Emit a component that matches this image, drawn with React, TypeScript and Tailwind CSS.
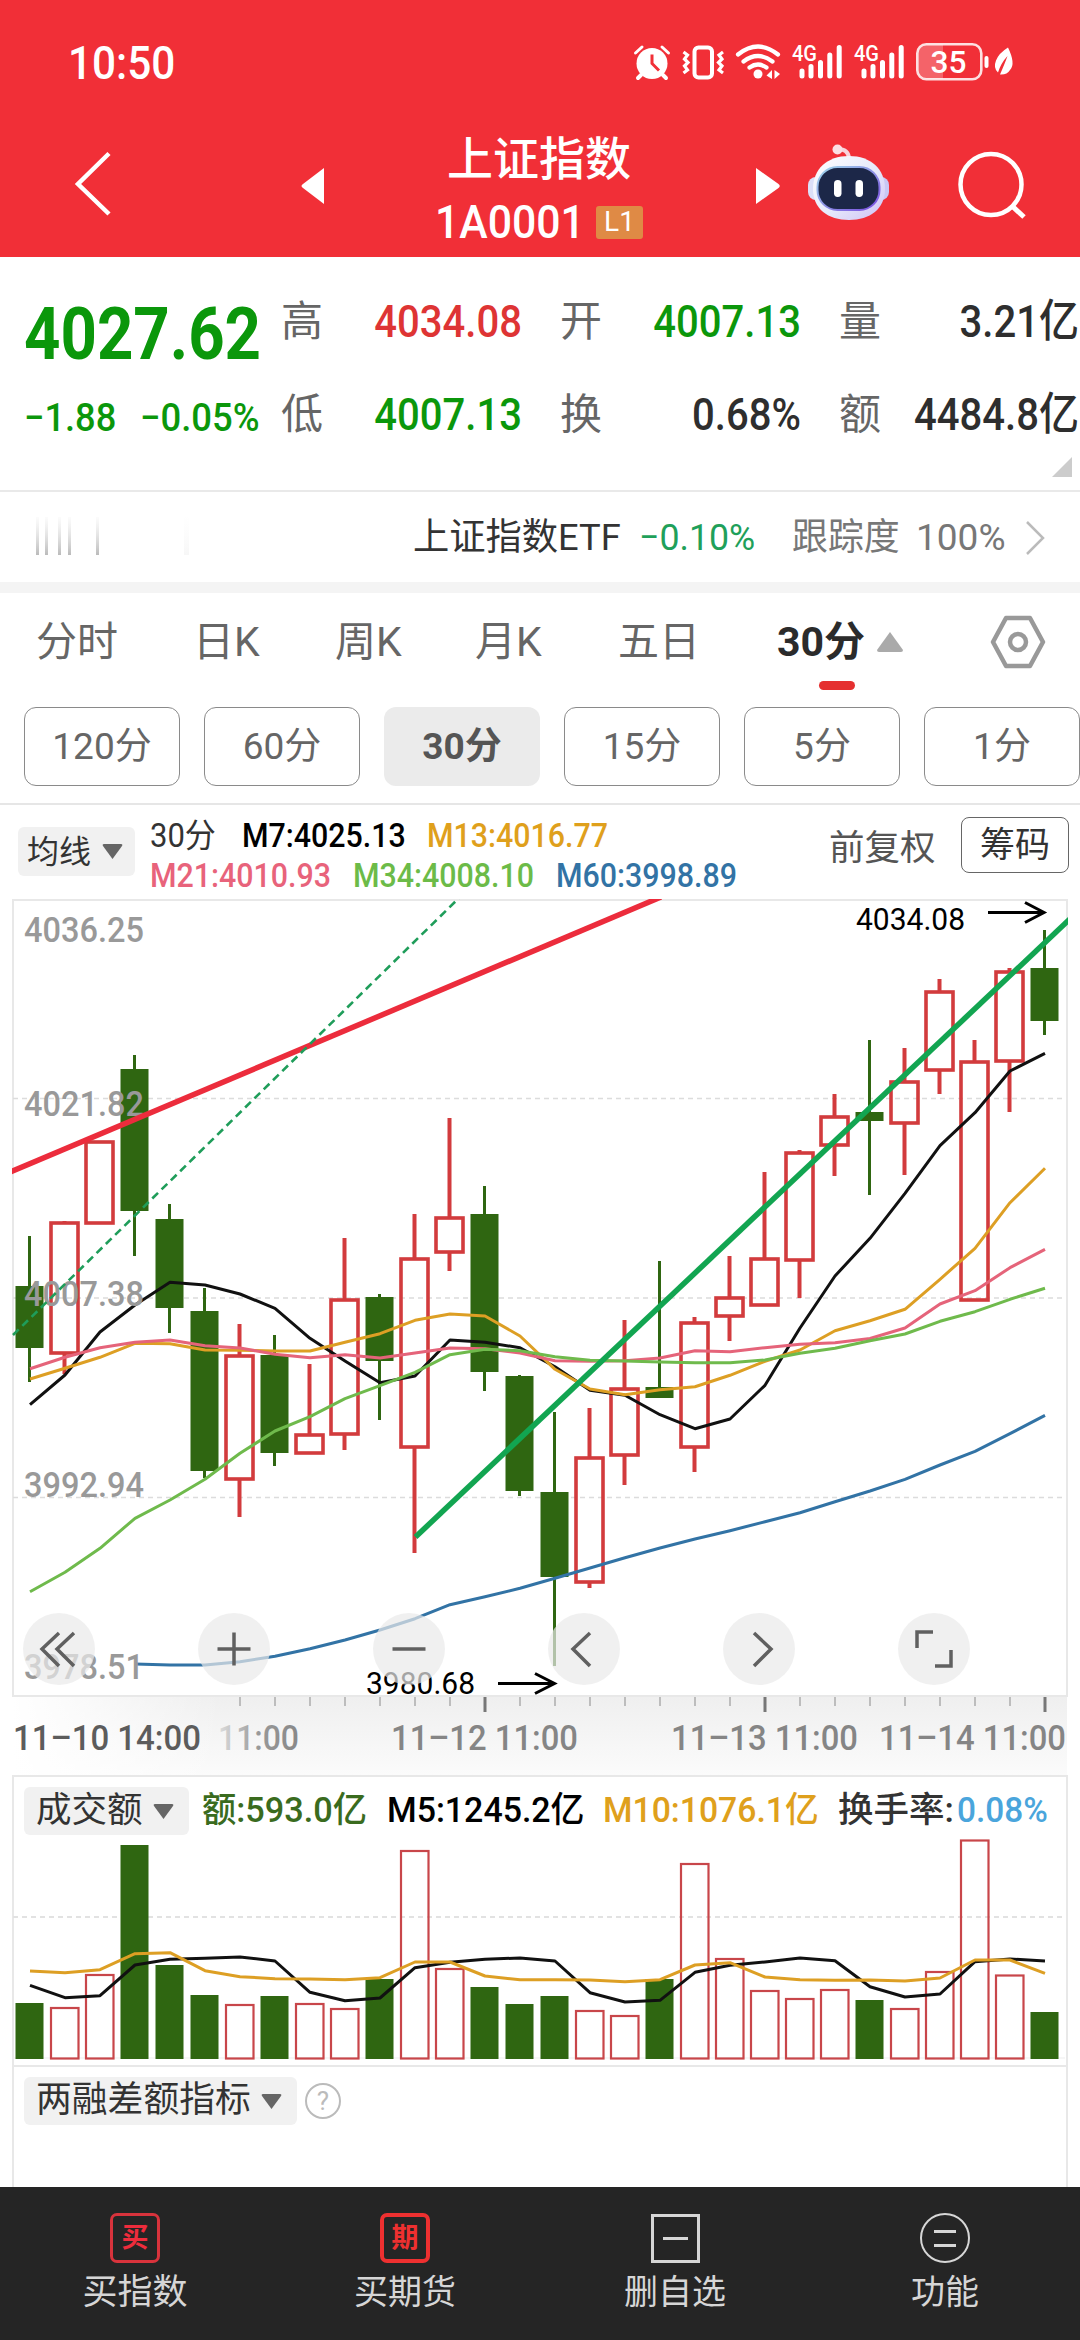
import type { ReactNode } from 'react'

const GREEN = '#2f6611'
const RED = '#d23b3d'

// x of the n-th bar
const cx = (i: number) => 29.5 + i * 35

type Candle = { up: boolean; high: number; top: number; bottom: number; low: number }

const candles: Candle[] = [
  { up: false, high: 1236, top: 1286, bottom: 1348, low: 1382 },
  { up: true, high: 1221, top: 1223, bottom: 1353, low: 1374 },
  { up: true, high: 1142, top: 1142, bottom: 1223, low: 1223 },
  { up: false, high: 1055, top: 1069, bottom: 1211, low: 1256 },
  { up: false, high: 1204, top: 1219, bottom: 1308, low: 1333 },
  { up: false, high: 1288, top: 1311, bottom: 1471, low: 1478 },
  { up: true, high: 1324, top: 1356, bottom: 1479, low: 1517 },
  { up: false, high: 1335, top: 1355, bottom: 1453, low: 1466 },
  { up: true, high: 1364, top: 1435, bottom: 1453, low: 1453 },
  { up: true, high: 1238, top: 1300, bottom: 1434, low: 1450 },
  { up: false, high: 1294, top: 1297, bottom: 1361, low: 1420 },
  { up: true, high: 1214, top: 1259, bottom: 1447, low: 1553 },
  { up: true, high: 1118, top: 1218, bottom: 1252, low: 1271 },
  { up: false, high: 1186, top: 1214, bottom: 1372, low: 1391 },
  { up: false, high: 1375, top: 1376, bottom: 1491, low: 1496 },
  { up: false, high: 1412, top: 1492, bottom: 1577, low: 1666 },
  { up: true, high: 1408, top: 1458, bottom: 1582, low: 1588 },
  { up: true, high: 1320, top: 1389, bottom: 1455, low: 1485 },
  { up: false, high: 1261, top: 1387, bottom: 1398, low: 1398 },
  { up: true, high: 1317, top: 1323, bottom: 1447, low: 1472 },
  { up: true, high: 1256, top: 1298, bottom: 1316, low: 1341 },
  { up: true, high: 1172, top: 1259, bottom: 1305, low: 1305 },
  { up: true, high: 1150, top: 1153, bottom: 1260, low: 1298 },
  { up: true, high: 1094, top: 1117, bottom: 1145, low: 1176 },
  { up: false, high: 1040, top: 1112, bottom: 1121, low: 1195 },
  { up: true, high: 1048, top: 1082, bottom: 1123, low: 1175 },
  { up: true, high: 979, top: 992, bottom: 1070, low: 1094 },
  { up: true, high: 1040, top: 1062, bottom: 1300, low: 1300 },
  { up: true, high: 968, top: 972, bottom: 1061, low: 1112 },
  { up: false, high: 930, top: 968, bottom: 1021, low: 1035 },
]

const m7 = [1404.7, 1375, 1332, 1305, 1282.3, 1285, 1294, 1308.3, 1338.3, 1361, 1382.7, 1376, 1340, 1342.3, 1347.7, 1366.7, 1390.3, 1395.3, 1414.7, 1428.7, 1419, 1385.3, 1328, 1276, 1238.3, 1193.3, 1145.7, 1112.7, 1071, 1053.3]
const m13 = [1379, 1368.3, 1357.3, 1343.3, 1343.7, 1350, 1350.3, 1351, 1351, 1342.3, 1333.7, 1320.3, 1314, 1316, 1336, 1369.3, 1389, 1394.7, 1389.7, 1386.7, 1375.3, 1361.3, 1350, 1330.7, 1320.7, 1309.3, 1279.3, 1248.3, 1202.7, 1168.3]
const m21 = [1368.7, 1357.3, 1347.7, 1342.3, 1340, 1345.7, 1348, 1354.3, 1357.7, 1354.7, 1358, 1353, 1348, 1348.7, 1353, 1360.7, 1361.3, 1360.7, 1358, 1350.7, 1351.7, 1347.7, 1344.3, 1342.7, 1338.5, 1328, 1304, 1290.7, 1267.7, 1249.3]
const m34 = [1591.7, 1572.3, 1548.3, 1518.3, 1500, 1479.3, 1453.3, 1431, 1416.7, 1398.7, 1385.7, 1372.3, 1354.7, 1349.3, 1350.7, 1356.7, 1360.3, 1361, 1362, 1362.7, 1362.7, 1360, 1353.3, 1348.3, 1340.7, 1334, 1321.3, 1311.7, 1299.3, 1288.3]
const m60 = [1664, 1665, 1665, 1661.7, 1656.3, 1648.7, 1640, 1630, 1618.7, 1604.7, 1596.7, 1588.3, 1578.3, 1568, 1557.7, 1548, 1539, 1530.7, 1521.7, 1512.7, 1501.7, 1491, 1479.3, 1465, 1451.3, 1433.7, 1415.3]

const volumes = [2003, 2008, 1975, 1845, 1965, 1995, 2005, 1996, 2004, 2009, 1979, 1851, 1969, 1987, 2004, 1996, 2011, 2016, 1979, 1864, 1959, 1991, 1999, 1990, 2000, 2009, 1972, 1840.5, 1975.5, 2012]
const v5 = [1985.3, 1997.7, 1995.7, 1965, 1959.3, 1958.3, 1957, 1961, 1992.3, 2000.7, 1998, 1967.7, 1962.3, 1959.3, 1958, 1961, 1992.7, 2002, 2000.3, 1972.3, 1965.3, 1962, 1958, 1960.7, 1986.7, 1997, 1994, 1961.7, 1959, 1961]
const v10 = [1971, 1972.7, 1969.7, 1953.7, 1952.7, 1970.7, 1976.7, 1978.7, 1979, 1979.7, 1977.7, 1962, 1962, 1976, 1979.7, 1979.7, 1980, 1981.7, 1979.7, 1965, 1962.7, 1977, 1979.7, 1980.3, 1980, 1981, 1978, 1960, 1960, 1973.3]

function Line({ values, color, start = 0 }: { values: number[]; color: string; start?: number }) {
  return (
    <polyline
      points={values.map((y, i) => `${cx(i + start) + 0.5},${y}`).join(' ')}
      fill="none"
      stroke={color}
      strokeWidth={3}
      strokeLinejoin="round"
    />
  )
}

function StatusIcons() {
  return (
    <svg className="h-[44px] w-[390px]" viewBox="630 40 390 44" fill="none" stroke="#fff">
      {/* alarm */}
      <circle cx="652" cy="62.500" r="15.500" fill="#fff" stroke="none" />
      <path d="M635.500 52 L642 46 M662 46 L668.500 52" strokeWidth="3" strokeLinecap="round" />
      <path d="M641 74 L638 77 M663 74 L666 77" strokeWidth="4" strokeLinecap="round" />
      <path d="M652 53.500 V62.500 L659 69.500" stroke="#f12f37" strokeWidth="3" />
      {/* vibrate */}
      <rect x="694.500" y="46.500" width="17.500" height="30" rx="4" strokeWidth="4" />
      <path d="M683.500 51 L687.500 54 L684.500 58 L688 61.500 L684.500 65 L687.500 69 L683.500 72" strokeWidth="3.200" />
      <path d="M723 51 L719 54 L722 58 L718.500 61.500 L722 65 L719 69 L723 72" strokeWidth="3.200" />
      {/* wifi */}
      <path d="M738 53.500 Q758 37.500 778 53.500" strokeWidth="4.200" strokeLinecap="round" />
      <path d="M743.500 60.500 Q758 49.500 772.500 60.500" strokeWidth="4.200" strokeLinecap="round" />
      <path d="M749.500 66.500 Q758 60.500 766.500 66.500" strokeWidth="4.200" strokeLinecap="round" />
      <circle cx="758" cy="73" r="4.500" fill="#fff" stroke="none" />
      <path d="M772 69 V78 L766.500 74.500 Z M774.500 69 V78 L780 73 Z" fill="#fff" stroke="none" />
      {/* two sim signals */}
      {[0, 62].map((dx) => (
        <g key={dx} transform={`translate(${dx} 0)`}>
          <path d="M802 70 V75 M811 65.500 V75 M820.500 61.500 V75 M829.800 54 V75 M839.200 46.500 V75" strokeWidth="5" strokeLinecap="round" />
          <text x="792" y="60" fontSize="21.500" fontWeight="500" fill="#fff" stroke="none" textLength="25" lengthAdjust="spacingAndGlyphs">4G</text>
        </g>
      ))}
      {/* battery */}
      <path d="M943 43.500 H927 a9 9 0 0 0 -9 9 V69 a9 9 0 0 0 9 9 H943 Z" fill="#fff" fillOpacity=".25" stroke="none" />
      <rect x="917.300" y="43.300" width="64" height="35" rx="9" strokeWidth="2.600" strokeOpacity=".85" />
      <text x="930.500" y="71.500" fontSize="31" fontWeight="500" fill="#fff" stroke="none" textLength="36" lengthAdjust="spacingAndGlyphs">35</text>
      <path d="M986.500 57 V65" strokeWidth="4" strokeLinecap="round" />
      <path d="M1008 46.500 Q1016 63 1010 69 Q1007 74 1000 73.500 Q1005 62 1007.500 55 Q1001 62 998 71.500 Q993 67 996 59.500 Q999 52 1008 46.500 Z" fill="#fff" stroke="none" />
    </svg>
  )
}

function Robot() {
  return (
    <svg className="h-[80px] w-[84px]" viewBox="806 143 84 80">
      <defs>
        <linearGradient id="head" x1="0" y1="0" x2="1" y2="1">
          <stop offset="0" stopColor="#fff" />
          <stop offset=".55" stopColor="#e6e9fb" />
          <stop offset="1" stopColor="#cfc0f4" />
        </linearGradient>
        <linearGradient id="rim" x1="0" y1="0" x2="1" y2="1">
          <stop offset="0" stopColor="#9fd8ea" />
          <stop offset="1" stopColor="#7a4be0" />
        </linearGradient>
      </defs>
      <path d="M837 149 Q847 149 848 158" fill="none" stroke="#f8d3dc" strokeWidth="4" />
      <circle cx="836.500" cy="149.500" r="5" fill="#fbdfe4" />
      <rect x="807" y="177" width="16" height="23" rx="8" fill="#dcdff8" />
      <rect x="872" y="177" width="16" height="23" rx="8" fill="#c9c8f4" />
      <path d="M848 156 C870 156 884 169 884 189 C884 209 869 220 848 220 C827 220 812 209 812 189 C812 169 826 156 848 156 Z" fill="url(#head)" />
      <rect x="816.500" y="167" width="62" height="43" rx="20" fill="#1c2748" stroke="url(#rim)" strokeWidth="2" />
      <rect x="833" y="180" width="7.500" height="17" rx="3.700" fill="#fff" />
      <rect x="854.500" y="180" width="7.500" height="17" rx="3.700" fill="#fff" />
    </svg>
  )
}

function Header() {
  return (
    <header className="h-[257px] bg-[#f12f37] text-white">
      <div className="flex h-[125px] items-center pl-[68px]">
        <span className="w-[562px] text-[46px] leading-none">
          <span className="inline-block origin-left scale-x-[.92] font-medium">10:50</span>
        </span>
        <StatusIcons />
      </div>
      <div className="flex h-[132px]">
        <svg className="mt-[20px] ml-[70px] h-[80px] w-[50px]" viewBox="70 145 50 80" fill="none" stroke="#fff" strokeWidth="4.500">
          <path d="M109 153.500 L78 184 L109 214" />
        </svg>
        <svg className="mt-[20px] ml-[175px] h-[80px] w-[40px]" viewBox="295 145 40 80" fill="#fff">
          <path d="M324 168 V204 L303 188 Q300 186 303 184 Z" />
        </svg>
        <div className="ml-[79px] flex w-[250px] flex-col items-center pt-[11px]">
          <div className="text-[46px] leading-[46px] font-medium">上证指数</div>
          <div className="mt-[17px] flex w-[208px] items-center">
            <span className="w-[161px] origin-left scale-x-[.93] text-[46px] leading-none font-medium whitespace-nowrap">1A0001</span>
            <span className="flex h-[33px] w-[47px] shrink-0 items-center justify-center rounded-[3px] bg-[#df8a45] text-[28px] leading-none">L1</span>
          </div>
        </div>
        <svg className="mt-[20px] ml-[87px] h-[80px] w-[40px]" viewBox="750 145 40 80" fill="#fff">
          <path d="M755 168 V204 L777.500 188 Q780 186 777.500 184 Z" />
        </svg>
        <div className="mt-[18px] ml-[16px]">
          <Robot />
        </div>
        <svg className="mt-[20px] ml-[60px] h-[80px] w-[80px]" viewBox="950 145 80 80" fill="none" stroke="#fff" strokeWidth="4.500">
          <circle cx="990" cy="184.500" r="30.500" />
          <path d="M1011 206 L1023 217" strokeWidth="5" />
        </svg>
      </div>
    </header>
  )
}

const quotes = [
  { label: '高', value: '4034.08', color: 'text-[#de3434]' },
  { label: '开', value: '4007.13', color: 'text-[#0b970b]' },
  { label: '量', value: '3.21亿', color: 'text-[#2e2e2e]' },
  { label: '低', value: '4007.13', color: 'text-[#0b970b]' },
  { label: '换', value: '0.68%', color: 'text-[#2e2e2e]' },
  { label: '额', value: '4484.8亿', color: 'text-[#2e2e2e]' },
]

function Quote() {
  return (
    <section className="relative flex h-[235px] border-b-2 border-[#e9e9e9]">
      <div className="w-[281px] shrink-0 pt-[39px] pl-[24px] text-[#0b970b]">
        <div className="flex h-[76px] origin-left scale-x-[.87] items-center text-[73px] leading-none font-bold">4027.62</div>
        <div className="mt-[16px] flex h-[60px] items-center text-[39px] leading-none font-medium whitespace-nowrap">
          <span className="w-[116px] origin-left scale-x-[.93]">−1.88</span>
          <span className="w-[120px] origin-left scale-x-[.935]">−0.05%</span>
        </div>
      </div>
      <div className="grid w-[798px] shrink-0 auto-rows-[93px] grid-cols-[241px_241px_240px] gap-x-[38px] pt-[18px]">
        {quotes.map((q) => (
          <div key={q.label} className="flex items-center justify-between leading-none">
            <span className="w-[42px] text-[42px] text-[#666]">{q.label}</span>
            <span className={`flex w-[160px] origin-right scale-x-[.89] justify-end text-[45px] font-medium whitespace-nowrap ${q.color}`}>{q.value}</span>
          </div>
        ))}
      </div>
      <svg className="absolute right-[8px] bottom-[13px] size-[20px]" viewBox="0 0 20 20">
        <path d="M20 0 V20 H0 Z" fill="#ccc" />
      </svg>
    </section>
  )
}

function EtfRow() {
  return (
    <section className="flex h-[90px] items-center pt-px pl-[30px] text-[37px] leading-none whitespace-nowrap">
      <svg className="h-[50px] w-[383px]" viewBox="30 512 383 50">
        <defs>
          <linearGradient id="fade" x1="0" y1="0" x2="0" y2="1">
            <stop offset="0" stopColor="#ddd" stopOpacity=".1" />
            <stop offset="1" stopColor="#bbb" />
          </linearGradient>
        </defs>
        {[36, 45, 58, 68, 96].map((x) => (
          <rect key={x} x={x} y="516" width="3" height="38" fill="url(#fade)" />
        ))}
        <rect x="184" y="516" width="5" height="38" fill="url(#fade)" opacity=".12" />
      </svg>
      <span className="w-[226px] origin-left scale-x-[.98] text-[#333]">上证指数ETF</span>
      <span className="w-[153px] origin-left scale-x-[.965] text-[#1fa05a]">−0.10%</span>
      <span className="w-[124px] origin-left scale-x-[.97] text-[#777]">跟踪度</span>
      <span className="w-[108px] text-[#777]">100%</span>
      <svg className="h-[40px] w-[24px]" viewBox="0 0 24 40" fill="none" stroke="#bbb" strokeWidth="2.500">
        <path d="M3 4 L19 20 L3 36" />
      </svg>
    </section>
  )
}

function Tabs() {
  return (
    <nav className="flex h-[105px] items-start pt-[28px] pl-[36px] text-[41px] leading-[42px] whitespace-nowrap text-[#666]">
      <span className="w-[157px]">分时</span>
      <span className="w-[142px]">日K</span>
      <span className="w-[140px]">周K</span>
      <span className="w-[143px]">月K</span>
      <span className="w-[159px]">五日</span>
      <div className="w-[213px]">
        <div className="flex items-center">
          <span className="font-bold text-[#2b2b2b]">30分</span>
          <svg className="ml-[12px] h-[20px] w-[26px]" viewBox="0 0 26 20">
            <path d="M13 0 L26 18 Q26 20 24 20 H2 Q0 20 0 18 Z" fill="#aaa" />
          </svg>
        </div>
        <div className="mt-[18px] ml-[42px] h-[9px] w-[36px] rounded-full bg-[#e53030]" />
      </div>
      <svg className="-mt-[7px] h-[56px] w-[56px]" viewBox="0 0 56 56" fill="none" stroke="#999" strokeWidth="4.500" strokeLinejoin="round">
        <path d="M16 4 H40 L53 28 L40 52 H16 L3 28 Z" />
        <circle cx="28" cy="28" r="8" />
      </svg>
    </nav>
  )
}

const periods = ['120分', '60分', '30分', '15分', '5分', '1分']

function Periods() {
  return (
    <div className="flex h-[107px] gap-[24px] border-b-2 border-[#e6e6e6] pt-[9px] pl-[24px]">
      {periods.map((p) => (
        <button
          key={p}
          className={`flex h-[79px] w-[156px] shrink-0 items-center justify-center rounded-[12px] text-[37px] leading-none ${
            p === '30分' ? 'bg-[#ebebeb] font-bold text-[#555]' : 'border-[1.5px] border-[#8a8a8a] text-[#666]'
          }`}
        >
          {p}
        </button>
      ))}
    </div>
  )
}

function Dropdown({ className, children }: { className: string; children: ReactNode }) {
  return (
    <div className={`flex shrink-0 items-center justify-between rounded-[6px] bg-[#f1f1f1] leading-none whitespace-nowrap text-[#333] ${className}`}>
      {children}
      <svg className="h-[15px] w-[21px]" viewBox="0 0 21 15">
        <path d="M2 0 H19 Q21 0 20 2 L10.500 15 L1 2 Q0 0 2 0 Z" fill="#666" />
      </svg>
    </div>
  )
}

function AverageLegend() {
  return (
    <div className="flex h-[94px] items-start text-[33px] leading-none whitespace-nowrap">
      <Dropdown className="mt-[22px] ml-[18px] h-[49px] w-[117px] pr-[12px] pl-[9px] text-[32px]">均线</Dropdown>
      <div className="ml-[15px] w-[679px] pt-[10px] font-medium">
        <div className="flex h-[40px] items-center">
          <span className="w-[92px] origin-left scale-x-[.94] font-normal text-[#333]">30分</span>
          <span className="w-[185px] origin-left scale-x-[.92] text-black">M7:4025.13</span>
          <span className="origin-left scale-x-[.92] text-[#dfa01c]">M13:4016.77</span>
        </div>
        <div className="flex h-[40px] items-center">
          <span className="w-[203px] origin-left scale-x-[.92] text-[#e8637b]">M21:4010.93</span>
          <span className="w-[203px] origin-left scale-x-[.92] text-[#6cbb48]">M34:4008.10</span>
          <span className="origin-left scale-x-[.92] text-[#3273a5]">M60:3998.89</span>
        </div>
      </div>
      <span className="mt-[26px] w-[132px] text-[35.500px] text-[#555]">前复权</span>
      <span className="mt-[12px] flex h-[56px] w-[108px] items-center justify-center rounded-[8px] border-[1.5px] border-[#666] text-[35px] text-[#333]">筹码</span>
    </div>
  )
}

const axisLabels = [
  { text: '4036.25', y: 942 },
  { text: '4021.82', y: 1116 },
  { text: '4007.38', y: 1306 },
  { text: '3992.94', y: 1497 },
  { text: '3978.51', y: 1679 },
]

const dates = [
  { text: '11–10 14:00', x: 13, w: 188, fill: '#5c5c5c' },
  { text: '11:00', x: 218, w: 81, fill: 'url(#dateFade)' },
  { text: '11–12 11:00', x: 391, w: 187, fill: '#858585' },
  { text: '11–13 11:00', x: 671, w: 187, fill: '#858585' },
  { text: '11–14 11:00', x: 879, w: 187, fill: '#858585' },
]

const tools = [
  'M36 20 L19 36 L36 53 M51 20 L34 36 L51 53',
  'M19.500 36 H52.500 M36 19.500 V52.500',
  'M19.500 36 H52.500',
  'M42 20 L25 36 L42 53',
  'M31 20 L48 36 L31 53',
  'M19 35 V19 H35 M37 53 H53 V37',
]

function PriceChart() {
  return (
    <div className="relative h-[876px]">
      <svg className="block h-[876px] w-[1080px]" viewBox="0 899 1080 876">
        <defs>
          <linearGradient id="strip" x1="0" y1="0" x2="0" y2="1">
            <stop offset="0" stopColor="#efefef" />
            <stop offset="1" stopColor="#fbfbfb" />
          </linearGradient>
          <linearGradient id="stripLeft" x1="0" y1="0" x2="1" y2="0">
            <stop offset="0" stopColor="#fff" />
            <stop offset="1" stopColor="#fff" stopOpacity="0" />
          </linearGradient>
          <linearGradient id="dateFade" x1="0" y1="0" x2="1" y2="0">
            <stop offset="0" stopColor="#ddd" />
            <stop offset=".5" stopColor="#999" />
            <stop offset="1" stopColor="#888" />
          </linearGradient>
          <clipPath id="plot">
            <rect x="12" y="899" width="1056" height="798" />
          </clipPath>
        </defs>

        <rect x="13" y="1697" width="1054" height="78" fill="url(#strip)" />
        <rect x="12" y="1697" width="210" height="78" fill="url(#stripLeft)" />
        <rect x="13" y="900" width="1054" height="796" fill="none" stroke="#e8e8e8" strokeWidth="2" />
        {[1098.5, 1298, 1497.5].map((y) => (
          <path key={y} d={`M13 ${y} H1065`} stroke="#dcdcdc" strokeWidth="1.300" strokeDasharray="5 4" />
        ))}

        {candles.map((c, i) =>
          c.up ? (
            <g key={i} stroke={RED} fill="none" strokeWidth="4">
              <path d={`M${cx(i)} ${c.high} V${c.top} M${cx(i)} ${c.bottom} V${c.low}`} />
              <rect x={cx(i) - 13.5} y={c.top} width="27" height={c.bottom - c.top} strokeWidth="3.600" />
            </g>
          ) : (
            <g key={i} fill={GREEN}>
              <rect x={cx(i) - 1.5} y={c.high} width="3" height={c.low - c.high} />
              <rect x={cx(i) - 14} y={c.top} width="28" height={c.bottom - c.top} />
            </g>
          ),
        )}

        <Line values={m7} color="#111" />
        <Line values={m13} color="#dd9f24" />
        <Line values={m21} color="#e5647a" />
        <Line values={m34} color="#6fba4c" />
        <Line values={m60} color="#3273a5" start={3} />

        {axisLabels.map((l) => (
          <text key={l.text} x="24" y={l.y} fontSize="35.500" fontWeight="500" fill="#999" textLength="120" lengthAdjust="spacingAndGlyphs">
            {l.text}
          </text>
        ))}

        <g clipPath="url(#plot)">
          <path d="M8 1173 L661 897" stroke="#ec2c3c" strokeWidth="5.500" />
          <path d="M13 1335 L459 898" stroke="#1f9d5a" strokeWidth="2.600" strokeDasharray="8 5" />
          <path d="M415.500 1537 L1071 918" stroke="#12a551" strokeWidth="5.500" />
        </g>

        <g fontSize="31.500" fill="#000">
          <text x="856" y="930" textLength="109" lengthAdjust="spacingAndGlyphs">4034.08</text>
          <text x="366" y="1694" textLength="109" lengthAdjust="spacingAndGlyphs">3980.68</text>
        </g>
        <g fill="none" stroke="#000" strokeWidth="3">
          <path d="M988 912.500 H1043 M1025 902.500 L1044 912.500 L1025 922.500" />
          <path d="M498 1683.500 H554 M535 1673.500 L554.500 1683.500 L535 1693.500" />
        </g>

        {candles.map((_, i) => {
          if (i < 6) return null
          const major = i === 13 || i === 21 || i === 29
          return <path key={i} d={`M${cx(i) + 0.5} 1697 V${major ? 1712 : 1706}`} stroke={major ? '#777' : '#bdbdbd'} strokeWidth={major ? 3 : 2} />
        })}
        {dates.map((d) => (
          <text key={d.x} x={d.x} y="1750" fontSize="34.500" fontWeight="500" fill={d.fill} textLength={d.w} lengthAdjust="spacingAndGlyphs">
            {d.text}
          </text>
        ))}
      </svg>

      <div className="absolute top-[714px] left-[23px] flex gap-[103px]">
        {tools.map((d) => (
          <button key={d} className="size-[72px] rounded-full bg-[#e9e9e9]/70">
            <svg className="size-[72px]" viewBox="0 0 72 72" fill="none" stroke="#606060" strokeWidth="3.500">
              <path d={d} />
            </svg>
          </button>
        ))}
      </div>
    </div>
  )
}

function VolumePanel() {
  return (
    <section className="mx-[12px] h-[290px] border-2 border-b-0 border-[#e8e8e8]">
      <div className="flex h-[62px] items-start pl-[10px] text-[35.500px] leading-none whitespace-nowrap">
        <Dropdown className="mt-[10px] h-[48px] w-[165px] pr-[15px] pl-[12px] text-[35.500px]">成交额</Dropdown>
        <div className="ml-[13px] flex h-[67px] items-center font-medium">
          <span className="w-[185px] origin-left scale-x-[.965] text-[#3a6b1e]">额:593.0亿</span>
          <span className="w-[216px] origin-left scale-x-[.955] text-black">M5:1245.2亿</span>
          <span className="w-[235px] origin-left scale-x-[.95] text-[#dfa01c]">M10:1076.1亿</span>
          <span className="w-[119px] text-[#333]">换手率:</span>
          <span className="origin-left scale-x-[.94] text-[#4aa5dc]">0.08%</span>
        </div>
      </div>
      <svg className="-ml-[2px] block h-[226px] w-[1056px]" viewBox="12 1839 1056 226" overflow="visible">
        <path d="M13 1917 H1065" stroke="#e2e2e2" strokeWidth="2" strokeDasharray="5 4" />
        <path d="M13 2058 H1065" stroke="#ededed" strokeWidth="1" />
        {volumes.map((y, i) =>
          candles[i].up ? (
            <rect key={i} x={cx(i) - 13.5} y={y} width="27.500" height={2058.5 - y} fill="none" stroke="#c8464a" strokeWidth="2.200" />
          ) : (
            <rect key={i} x={cx(i) - 14} y={y} width="28" height={2059 - y} fill={GREEN} />
          ),
        )}
        <Line values={v5} color="#111" />
        <Line values={v10} color="#dd9f24" />
      </svg>
    </section>
  )
}

function MarginPanel() {
  return (
    <section className="mx-[12px] flex h-[122px] items-start border-2 border-b-0 border-[#e8e8e8] pt-[10px] pl-[10px]">
      <Dropdown className="h-[48px] w-[273px] pr-[15px] pl-[12px] text-[35.800px]">两融差额指标</Dropdown>
      <div className="mt-[6px] ml-[8px] flex size-[36px] items-center justify-center rounded-full border-2 border-[#bbb] text-[26px] leading-none text-[#bbb]">?</div>
    </section>
  )
}

function BottomBar() {
  return (
    <footer className="grid h-[153px] grid-cols-4 bg-[#252525] pt-[26px] text-[35px] leading-none text-[#d6d6d6]">
      <div className="flex flex-col items-center">
        <div className="flex size-[50px] items-center justify-center rounded-[7px] border-[3px] border-[#d8333c] text-[27px] font-bold text-[#ee2c3c]">买</div>
        <span className="mt-[12px]">买指数</span>
      </div>
      <div className="flex flex-col items-center">
        <div className="flex size-[50px] items-center justify-center rounded-[7px] border-4 border-[#ee3030] text-[27px] font-bold text-[#ee3030]">期</div>
        <span className="mt-[12px] text-[34px]">买期货</span>
      </div>
      <div className="flex flex-col items-center">
        <div className="mt-px flex size-[49px] items-center justify-center border-[3px] border-[#d6d6d6]">
          <div className="h-[3px] w-[25px] bg-[#d6d6d6]" />
        </div>
        <span className="mt-[12px] text-[34px]">删自选</span>
      </div>
      <div className="flex flex-col items-center">
        <div className="flex size-[50px] flex-col items-center justify-center gap-[11px] rounded-full border-[2.500px] border-[#d6d6d6]">
          <div className="h-[3px] w-[22px] bg-[#d6d6d6]" />
          <div className="h-[3px] w-[22px] bg-[#d6d6d6]" />
        </div>
        <span className="mt-[12px] text-[34px]">功能</span>
      </div>
    </footer>
  )
}

export default function App() {
  return (
    <main className="h-[2340px] w-[1080px] overflow-hidden bg-white font-[Roboto,'Noto_Sans_CJK_SC',sans-serif]">
      <Header />
      <Quote />
      <EtfRow />
      <div className="h-[11px] bg-[#f4f4f4]" />
      <Tabs />
      <Periods />
      <AverageLegend />
      <PriceChart />
      <VolumePanel />
      <MarginPanel />
      <BottomBar />
    </main>
  )
}
